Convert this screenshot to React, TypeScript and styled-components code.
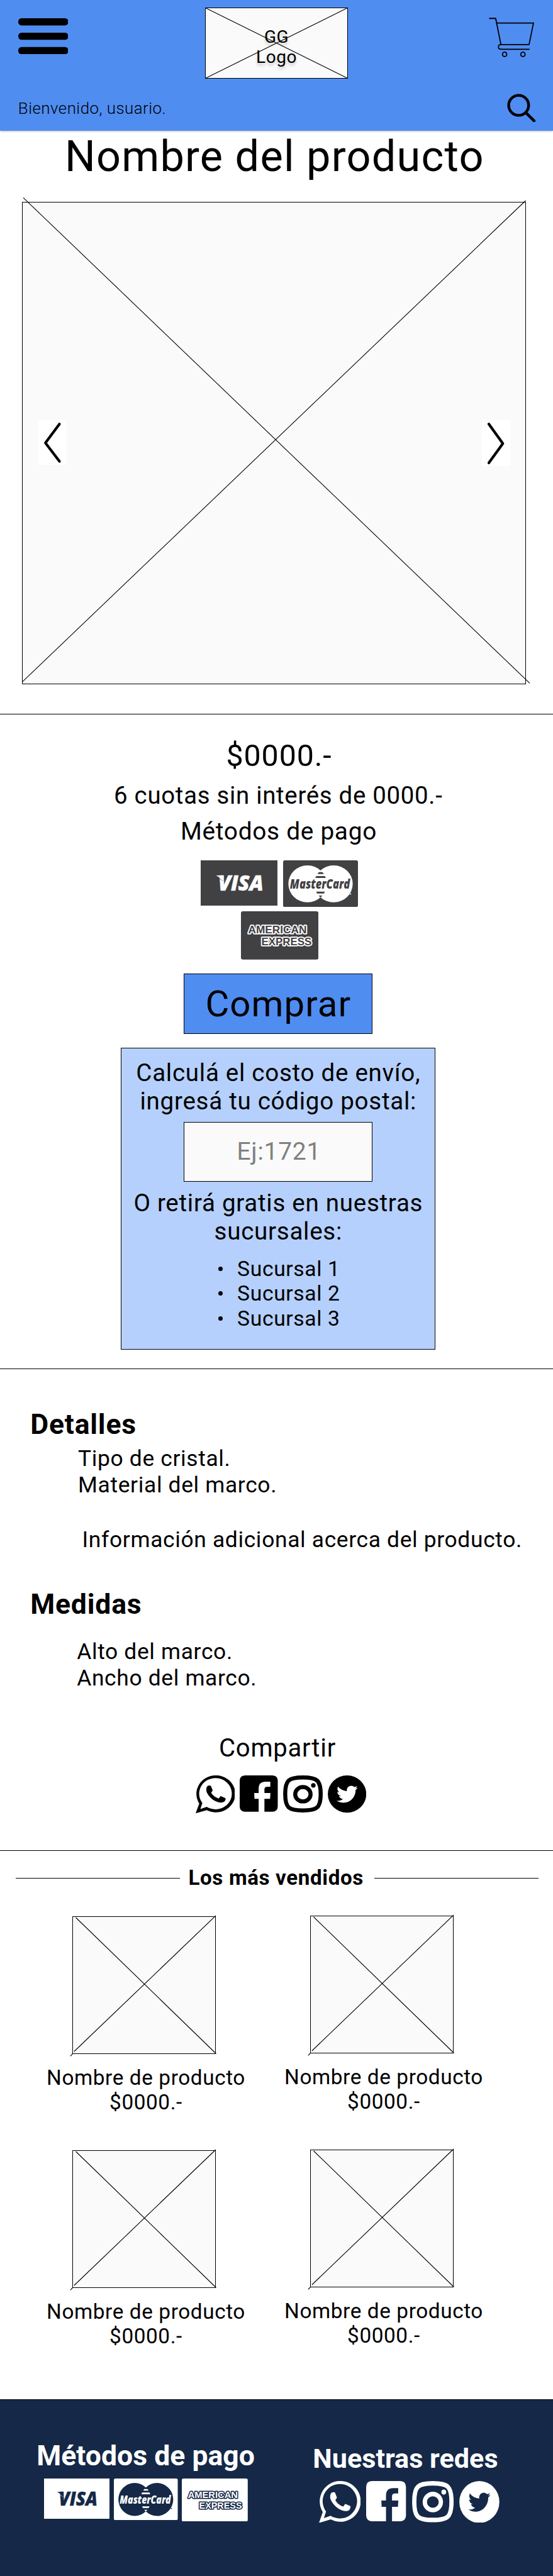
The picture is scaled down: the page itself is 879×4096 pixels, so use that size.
import React from 'react';
import styled, { createGlobalStyle } from 'styled-components';

const INK = '#000';
const BLUE = '#4f8df1';
const PALE_BLUE = '#b5d0fc';
const NAVY = '#152847';
const PAPER = '#fafafa';
const GRAPHITE = '#414042';

const GlobalStyle = createGlobalStyle`
  *, *::before, *::after { box-sizing: border-box; }
  body { margin: 0; background: #fff; }
  h1, h2, h3, p, ul, figure { margin: 0; padding: 0; font-weight: 400; }
  h1, h2, h3, p, li, button, input { letter-spacing: 0.0183em; }
  svg { display: block; flex: none; }
`;

const Page = styled.div`
  width: 879px;
  height: 4096px;
  overflow: hidden;
  display: flex;
  flex-direction: column;
  background: #fff;
  color: ${INK};
  font-family: Roboto, 'Liberation Sans', sans-serif;
`;

/* ---------- header ---------- */

const Header = styled.header`
  height: 208px;
  flex: none;
  background: ${BLUE};
  box-shadow: 0 2px 3px -1px rgba(0, 0, 0, 0.25);
`;

const TopBar = styled.div`
  display: flex;
  align-items: flex-start;
  height: 125px;
  padding: 0 30px 0 28.6px;
`;

const MenuSlot = styled.div`
  margin-top: 28.5px;
`;

const CartSlot = styled.div`
  margin: 27.6px 0 0 auto;
`;

const Placeholder = styled.figure<{ $w: number; $h: number }>`
  position: relative;
  flex: none;
  width: ${(p) => p.$w}px;
  height: ${(p) => p.$h}px;
  border: 1px solid ${INK};
  background: ${PAPER};
`;

const Strokes = styled.svg`
  position: absolute;
  left: -1px;
  top: -1px;
  overflow: visible;
  fill: none;
  stroke: ${INK};
  stroke-width: 1.1;
`;

const LogoBox = styled(Placeholder)`
  margin: 12px 0 0 217.8px;
`;

const LogoText = styled.p`
  padding-top: 29.6px;
  font-size: 28px;
  line-height: 32.6px;
  text-align: center;
  text-shadow: 0 4px 4px rgba(0, 0, 0, 0.2);
`;

const GreetingBar = styled.div`
  display: flex;
  justify-content: space-between;
  align-items: flex-start;
  padding: 23.7px 27.2px 0 28.8px;
`;

const Greeting = styled.p`
  margin-top: 8.7px;
  font-size: 25.9px;
  line-height: 30px;
  font-weight: 300;
`;

/* ---------- gallery ---------- */

const Section = styled.section<{ $h: number }>`
  flex: none;
  height: ${(p) => p.$h}px;
  border-bottom: 1px solid ${INK};
`;

const ProductTitle = styled.h1`
  margin-top: 0.9px;
  padding-left: 102.9px;
  font-size: 68.4px;
  line-height: 80px;
  white-space: nowrap;
`;

const Gallery = styled(Placeholder)`
  display: flex;
  justify-content: space-between;
  align-items: flex-start;
  margin: 32.1px 0 0 35px;
  padding: 346.5px 24.3px 0 24.6px;
`;

const ArrowButton = styled.button<{ $h: number }>`
  position: relative;
  width: 45px;
  height: ${(p) => p.$h}px;
  padding: 0;
  border: 0;
  background: #fff;
`;

/* ---------- purchase ---------- */

const Purchase = styled(Section)`
  display: flex;
  flex-direction: column;
  align-items: center;
  padding-left: 5.6px;
`;

const Price = styled.p`
  margin-top: 38.1px;
  padding-left: 2.5px;
  font-size: 48.3px;
  line-height: 56px;
`;

const Installments = styled.p`
  margin-top: 11.9px;
  font-size: 38.4px;
  line-height: 46px;
`;

const PaymentTitle = styled(Installments)`
  margin-top: 11.3px;
  padding-left: 1.4px;
  font-size: 38.8px;
`;

const CardRow = styled.div`
  display: flex;
  align-items: flex-start;
  gap: 9.1px;
  margin-top: 22.5px;
  padding-left: 3.4px;
`;

const LastCardRow = styled(CardRow)`
  margin-top: 7.2px;
  padding-left: 4px;
`;

const BuyButton = styled.button`
  width: 300px;
  height: 96px;
  margin-top: 21.9px;
  padding: 0;
  border: 1px solid ${INK};
  background: ${BLUE};
  color: ${INK};
  font: 400 58.1px/92px Roboto, 'Liberation Sans', sans-serif;
`;

const ShippingPanel = styled.div`
  display: flex;
  flex-direction: column;
  align-items: center;
  width: 500px;
  height: 479.4px;
  margin-top: 22.2px;
  padding-top: 15.7px;
  border: 1px solid ${INK};
  background: ${PALE_BLUE};
`;

const PanelText = styled.p`
  font-size: 38.6px;
  line-height: 45.2px;
  text-align: center;
  white-space: nowrap;
`;

const PostalField = styled.input`
  width: 300px;
  height: 95.3px;
  margin: 10.3px 0 11.2px;
  padding: 0 0 1px 2px;
  border: 1px solid ${INK};
  border-radius: 0;
  background: ${PAPER};
  font: 400 39px Roboto, 'Liberation Sans', sans-serif;
  text-align: center;
  &::placeholder { color: #808080; opacity: 1; }
`;

const BranchList = styled.ul`
  align-self: flex-start;
  margin-top: 17.5px;
  padding-left: 154px;
  list-style: none;
`;

const Branch = styled.li`
  display: flex;
  align-items: center;
  gap: 22.8px;
  font-size: 33.7px;
  line-height: 39.3px;
  &::before {
    content: '';
    width: 7px;
    height: 7px;
    border-radius: 50%;
    background: ${INK};
  }
`;

/* ---------- details ---------- */

const DetailHeading = styled.h2<{ $gap: number }>`
  margin-top: ${(p) => p.$gap}px;
  padding-left: 48.2px;
  font-size: 44.5px;
  line-height: 52px;
  font-weight: 700;
`;

const DetailText = styled.p<{ $gap: number; $indent: number }>`
  margin-top: ${(p) => p.$gap}px;
  padding-left: ${(p) => p.$indent}px;
  font-size: 35.4px;
  line-height: 41.4px;
  white-space: nowrap;
`;

const ShareTitle = styled.h3`
  margin-top: 66.7px;
  padding-left: 3px;
  font-size: 40.1px;
  line-height: 48px;
  text-align: center;
`;

const ShareRow = styled.div`
  display: flex;
  align-items: flex-start;
  gap: 8px;
  margin: 19.4px 0 0 310.6px;
`;

/* ---------- best sellers ---------- */

const BestSellers = styled.section`
  flex: none;
  height: 872px;
`;

const RuledHeading = styled.div`
  display: flex;
  align-items: center;
  padding: 23.1px 23px 0 25.2px;
`;

const Rule = styled.span`
  width: 260.7px;
  height: 1px;
  background: ${INK};
`;

const RuledTitle = styled.h2`
  flex: 1;
  padding-left: 13.6px;
  font-size: 33.2px;
  line-height: 40px;
  font-weight: 700;
  white-space: nowrap;
`;

const ProductGrid = styled.div`
  display: grid;
  grid-template-columns: 316px 316px;
  grid-auto-rows: 372px;
  column-gap: 62px;
  padding: 40.9px 0 0 74px;
`;

const ProductCard = styled.article`
  &:nth-child(even) { margin-top: -1px; }
`;

const Thumb = styled(Placeholder)`
  margin-left: 41px;
`;

const ProductCaption = styled.p`
  margin-top: 19.4px;
  font-size: 33.3px;
  line-height: 38.4px;
  text-align: center;
  white-space: nowrap;
`;

/* ---------- footer ---------- */

const Footer = styled.footer`
  display: flex;
  flex: none;
  height: 281px;
  border-top: 1px solid ${INK};
  background: ${NAVY};
  color: #fff;
`;

const FooterPayments = styled.div`
  width: 439px;
  padding: 62.7px 0 0 58.3px;
`;

const FooterNetworks = styled.div`
  padding: 68px 0 0 58.3px;
`;

const FooterTitle = styled.h2<{ $size: number }>`
  font-size: ${(p) => p.$size}px;
  line-height: 52px;
  font-weight: 700;
  letter-spacing: 0;
  white-space: nowrap;
`;

const FooterCards = styled.div`
  display: flex;
  align-items: flex-start;
  gap: 6.8px;
  padding: 10.4px 0 0 11.8px;
`;

const FooterIcons = styled.div`
  display: flex;
  align-items: flex-start;
  gap: 8.9px;
  padding: 8.9px 0 0 10px;
`;

/* ---------- drawings ---------- */

const MenuIcon = () => (
  <svg width="79.6" height="57.2" viewBox="0 0 79.6 57.2">
    {[0, 22.9, 45.8].map((y) => (
      <rect key={y} y={y} width="79.6" height="11.4" rx="5.2" />
    ))}
  </svg>
);

const CartIcon = () => (
  <svg width="72.5" height="63" viewBox="170 145 380 330" fill="none" stroke={INK} strokeWidth="9.5" strokeLinecap="round" strokeLinejoin="round">
    <path d="M176 151.500H227L271 370H505L542 190H236" strokeLinejoin="miter" />
    <path d="M271 370C243 370 243 408.500 271 408.500H506" />
    <circle cx="301.500" cy="451" r="18" />
    <circle cx="454" cy="451" r="18" />
  </svg>
);

const SearchIcon = () => (
  <svg width="45.8" height="45.8" viewBox="325 780 240 240" fill="none" stroke={INK} strokeWidth="23">
    <circle cx="421.500" cy="877" r="83" />
    <path d="M483 939L550 1006" strokeLinecap="round" />
  </svg>
);

type CardProps = { w: number; h: number; bg: string; fg: string };

const markFont = "'Open Sans', 'Liberation Sans', sans-serif";

const VisaCard = ({ w, h, bg, fg }: CardProps) => (
  <svg width={w} height={h} viewBox="51 213 641 378" preserveAspectRatio="none">
    <rect x="51" y="213" width="641" height="378" fill={bg} />
    <text x="196" y="465" fill={fg} stroke={fg} strokeWidth="3" fontFamily={markFont} fontWeight="800" fontStyle="italic" fontSize="174" textLength="378" lengthAdjust="spacingAndGlyphs">VISA</text>
    <path d="M179 339H238L240 386Q212 354 179 339Z" fill={fg} />
    <path d="M203 364L238 384" stroke={bg} strokeWidth="3" />
  </svg>
);

const MasterCard = ({ w, h, bg, fg }: CardProps) => (
  <svg width={w} height={h} viewBox="740 213 624 390" preserveAspectRatio="none">
    <rect x="740" y="213" width="624" height="390" rx="15" fill={bg} />
    <ellipse cx="943" cy="409" rx="159" ry="154.500" fill={fg} />
    <ellipse cx="1161" cy="409" rx="159" ry="154.500" fill={fg} />
    <path d="M1037 311H1068L1080 327H1027ZM1016 344H1088L1096 360H1008ZM1015 474H1089L1080 490H1024ZM1036 506H1068L1052 522Z" fill={bg} />
    <text x="797" y="447" fill={bg} fontFamily={markFont} fontWeight="800" fontStyle="italic" fontSize="106" textLength="500" lengthAdjust="spacingAndGlyphs">MasterCard</text>
    <circle cx="1302" cy="494" r="5.500" fill={fg} />
  </svg>
);

const AmexCard = ({ w, h, bg, fg }: CardProps) => (
  <svg width={w} height={h} viewBox="386 641 646 402" preserveAspectRatio="none">
    <rect x="386" y="641" width="646" height="402" rx="16" fill={bg} />
    <g fill={bg} stroke={fg} strokeWidth="19" strokeLinejoin="round" paintOrder="stroke" fontFamily="'Liberation Sans', sans-serif" fontWeight="700" fontSize="86">
      <text x="446" y="822" textLength="488" lengthAdjust="spacingAndGlyphs">AMERICAN</text>
      <text x="556" y="923" textLength="419" lengthAdjust="spacingAndGlyphs">EXPRESS</text>
    </g>
  </svg>
);

type IconProps = { w: number; h: number };

const WhatsappIcon = ({ w, h }: IconProps) => (
  <svg width={w} height={h} viewBox="38 708 329 316" preserveAspectRatio="none" fill="currentColor">
    <path fillRule="evenodd" d="M38 1024L68 942A162 154 0 1 1 131 998ZM77 988L130 970A136 130 0 1 0 94 938Z" />
    <path d="M137 796Q150 790 164 794L180 832Q176 842 167 851C180 875 205 894 230 900L246 880L287 898Q290 915 278 926C260 938 240 936 225 931C175 915 145 880 129 845Q121 815 137 796Z" />
  </svg>
);

const FacebookIcon = ({ w, h }: IconProps) => (
  <svg width={w} height={h} viewBox="405 710 317 303" preserveAspectRatio="none" fill="currentColor">
    <path d="M450 710H677Q722 712 722 755V968Q722 1011 677 1013H611V905H658L661 857H611V826Q611 806 632 804H660V763H620C585 763 563 780 563 820V857H526L528 905H563V1013H450Q405 1011 405 968V755Q405 712 450 710Z" />
  </svg>
);

const InstagramIcon = ({ w, h }: IconProps) => (
  <svg width={w} height={h} viewBox="771 708 331 310" preserveAspectRatio="none" fill="none" stroke="currentColor">
    <path strokeWidth="34" d="M936 725.500C1055 725.500 1084.500 748 1084.500 863C1084.500 978 1055 1000 936 1000C817 1000 788.500 978 788.500 863C788.500 748 817 725.500 936 725.500Z" />
    <ellipse cx="936" cy="865" rx="64" ry="60" strokeWidth="34" />
    <circle cx="1023" cy="791" r="19" fill="currentColor" stroke="none" />
  </svg>
);

const TwitterIcon = ({ w, h, hole }: IconProps & { hole: string }) => (
  <svg width={w} height={h} viewBox="1140 709 322 311" preserveAspectRatio="none">
    <ellipse cx="1301" cy="864.500" rx="160.500" ry="155.500" fill="currentColor" />
    <path
      fill={hole}
      transform="translate(1213 778.600) scale(.346 .341)"
      d="M459.37 151.716c.325 4.548.325 9.097.325 13.645 0 138.72-105.583 298.558-298.558 298.558-59.452 0-114.68-17.219-161.137-47.106 8.447.974 16.568 1.299 25.34 1.299 49.055 0 94.213-16.568 130.274-44.832-46.132-.975-84.792-31.188-98.112-72.772 6.498.974 12.995 1.624 19.818 1.624 9.421 0 18.843-1.3 27.614-3.573-48.081-9.747-84.143-51.98-84.143-102.985v-1.299c13.969 7.797 30.214 12.67 47.431 13.319-28.264-18.843-46.781-51.005-46.781-87.391 0-19.492 5.197-37.36 14.294-52.954 51.655 63.675 129.3 105.258 216.365 109.807-1.624-7.797-2.599-15.918-2.599-24.04 0-57.828 46.782-104.934 104.934-104.934 30.213 0 57.502 12.67 76.67 33.137 23.715-4.548 46.456-13.32 66.599-25.34-7.798 24.366-24.366 44.833-46.132 57.827 21.117-2.273 41.584-8.122 60.426-16.243-14.292 20.791-32.161 39.308-52.628 54.253z"
    />
  </svg>
);

const Product = () => (
  <ProductCard>
    <Thumb $w={228} $h={219}>
      <Strokes width="228" height="219">
        <path d="M5.500 2L228.500 218.500M228 -1L2.800 215M0.500 218.500L-3.200 222.300" />
      </Strokes>
    </Thumb>
    <ProductCaption>
      Nombre de producto
      <br />
      $0000.-
    </ProductCaption>
  </ProductCard>
);

export default function App() {
  return (
    <Page>
      <GlobalStyle />
      <Header>
        <TopBar>
          <MenuSlot>
            <MenuIcon />
          </MenuSlot>
          <LogoBox $w={227} $h={113}>
            <Strokes width="227" height="113">
              <path d="M.5 .5L226.500 112.500M226.500 .5L.5 112.500" />
            </Strokes>
            <LogoText>
              GG
              <br />
              Logo
            </LogoText>
          </LogoBox>
          <CartSlot>
            <CartIcon />
          </CartSlot>
        </TopBar>
        <GreetingBar>
          <Greeting>Bienvenido, usuario.</Greeting>
          <SearchIcon />
        </GreetingBar>
      </Header>

      <Section $h={928}>
        <ProductTitle>Nombre del producto</ProductTitle>
        <Gallery $w={801} $h={767}>
          <Strokes width="801" height="767">
            <path d="M2 -6.600L807 765.400M800.500 -2L.3 763.400" />
          </Strokes>
          <ArrowButton $h={70.2} aria-label="Anterior">
            <svg width="45" height="70" fill="none" stroke={INK} strokeWidth="4.200" strokeLinecap="round" strokeLinejoin="round">
              <path d="M33.500 5.200L11.200 35.200L33.500 64.500" />
            </svg>
          </ArrowButton>
          <ArrowButton $h={72.5} aria-label="Siguiente">
            <svg width="45" height="72" fill="none" stroke={INK} strokeWidth="4.200" strokeLinecap="round" strokeLinejoin="round">
              <path d="M11 5.200L33.300 36.200L11 67" />
            </svg>
          </ArrowButton>
        </Gallery>
      </Section>

      <Purchase $h={1041}>
        <Price>$0000.-</Price>
        <Installments>6 cuotas sin interés de 0000.-</Installments>
        <PaymentTitle>Métodos de pago</PaymentTitle>
        <CardRow>
          <VisaCard w={122.3} h={72} bg={GRAPHITE} fg="#fff" />
          <MasterCard w={119} h={74.4} bg={GRAPHITE} fg="#fff" />
        </CardRow>
        <LastCardRow>
          <AmexCard w={123.2} h={76.7} bg={GRAPHITE} fg="#fff" />
        </LastCardRow>
        <BuyButton>Comprar</BuyButton>
        <ShippingPanel>
          <PanelText>
            Calculá el costo de envío,
            <br />
            ingresá tu código postal:
          </PanelText>
          <PostalField placeholder="Ej:1721" />
          <PanelText>
            O retirá gratis en nuestras
            <br />
            sucursales:
          </PanelText>
          <BranchList>
            <Branch>Sucursal 1</Branch>
            <Branch>Sucursal 2</Branch>
            <Branch>Sucursal 3</Branch>
          </BranchList>
        </ShippingPanel>
      </Purchase>

      <Section $h={766}>
        <DetailHeading $gap={61.8}>Detalles</DetailHeading>
        <DetailText $gap={8.6} $indent={124}>
          Tipo de cristal.
          <br />
          Material del marco.
        </DetailText>
        <DetailText $gap={45.3} $indent={130.6}>
          Información adicional acerca del producto.
        </DetailText>
        <DetailHeading $gap={55.6}>Medidas</DetailHeading>
        <DetailText $gap={29.9} $indent={122.2}>
          Alto del marco.
          <br />
          Ancho del marco.
        </DetailText>
        <ShareTitle>Compartir</ShareTitle>
        <ShareRow>
          <WhatsappIcon w={62.8} h={60.3} />
          <FacebookIcon w={60.5} h={57.8} />
          <InstagramIcon w={63.1} h={59.1} />
          <TwitterIcon w={61.3} h={59.3} hole="#fff" />
        </ShareRow>
      </Section>

      <BestSellers>
        <RuledHeading>
          <Rule />
          <RuledTitle>Los más vendidos</RuledTitle>
          <Rule />
        </RuledHeading>
        <ProductGrid>
          <Product />
          <Product />
          <Product />
          <Product />
        </ProductGrid>
      </BestSellers>

      <Footer>
        <FooterPayments>
          <FooterTitle $size={44.56}>Métodos de pago</FooterTitle>
          <FooterCards>
            <VisaCard w={104.2} h={64} bg="#fff" fg={NAVY} />
            <MasterCard w={101.5} h={66.2} bg="#fff" fg={NAVY} />
            <AmexCard w={104.8} h={68.4} bg="#fff" fg={NAVY} />
          </FooterCards>
        </FooterPayments>
        <FooterNetworks>
          <FooterTitle $size={43.17}>Nuestras redes</FooterTitle>
          <FooterIcons>
            <WhatsappIcon w={66.2} h={66.6} />
            <FacebookIcon w={63.3} h={63.9} />
            <InstagramIcon w={66.2} h={65.8} />
            <TwitterIcon w={63.9} h={66.6} hole={NAVY} />
          </FooterIcons>
        </FooterNetworks>
      </Footer>
    </Page>
  );
}
